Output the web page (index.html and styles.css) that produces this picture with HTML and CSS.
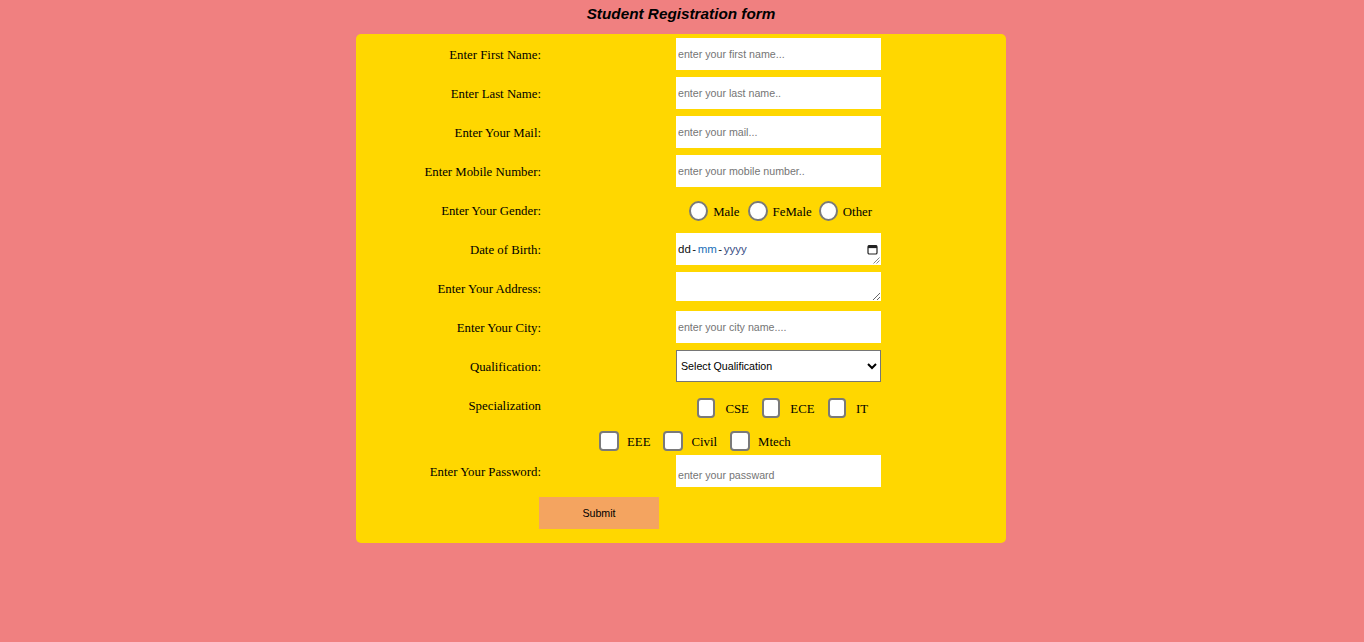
FILE: index.html
```html
<!DOCTYPE html>
<html lang="en">
<head>
<meta charset="utf-8">
<title>Student Registration form</title>
<link rel="stylesheet" href="styles.css">
</head>
<body>
<h1 class="title">Student Registration form</h1>
<form class="form">
  <div class="row">
    <label class="label">Enter First Name:</label>
    <input class="field" type="text" placeholder="enter your first name...">
  </div>
  <div class="row">
    <label class="label">Enter Last Name:</label>
    <input class="field" type="text" placeholder="enter your last name..">
  </div>
  <div class="row">
    <label class="label">Enter Your Mail:</label>
    <input class="field" type="text" placeholder="enter your mail...">
  </div>
  <div class="row">
    <label class="label">Enter Mobile Number:</label>
    <input class="field" type="text" placeholder="enter your mobile number..">
  </div>
  <div class="row">
    <label class="label">Enter Your Gender:</label>
    <div class="radios">
      <input class="radio" type="radio" name="g"><span class="opt opt-male">Male</span>
      <input class="radio" type="radio" name="g"><span class="opt opt-female">FeMale</span>
      <input class="radio" type="radio" name="g"><span class="opt">Other</span>
    </div>
  </div>
  <div class="row">
    <label class="label">Date of Birth:</label>
    <div class="date">
      <span class="date-text"><span class="seg-d">dd</span><span class="dash">-</span><span class="seg-m">mm</span><span class="dash">-</span><span class="seg-y">yyyy</span></span>
      <svg class="cal" width="11" height="11" viewBox="0 0 11 11" aria-hidden="true">
        <rect x="1" y="1.5" width="9" height="8.5" rx="1.3" fill="none" stroke="#222" stroke-width="1.2"/>
        <rect x="1" y="1.5" width="9" height="2.6" fill="#222"/>
      </svg>
      <svg class="grip" width="8" height="8" viewBox="0 0 8 8" aria-hidden="true">
        <path d="M7.5 1.5 L1.5 7.5 M7.5 4.5 L4.5 7.5" stroke="#888" stroke-width="1"/>
      </svg>
    </div>
  </div>
  <div class="row">
    <label class="label">Enter Your Address:</label>
    <textarea class="area"></textarea>
  </div>
  <div class="row">
    <label class="label">Enter Your City:</label>
    <input class="field" type="text" placeholder="enter your city name....">
  </div>
  <div class="row">
    <label class="label">Qualification:</label>
    <select class="select">
      <option>Select Qualification</option>
    </select>
  </div>
  <div class="row">
    <label class="label">Specialization</label>
    <div class="checks checks-one">
      <input class="check" type="checkbox"><span class="copt">CSE</span>
      <input class="check" type="checkbox"><span class="copt">ECE</span>
      <input class="check" type="checkbox"><span class="copt">IT</span>
    </div>
  </div>
  <div class="checks checks-two">
    <input class="check" type="checkbox"><span class="copt">EEE</span>
    <input class="check" type="checkbox"><span class="copt">Civil</span>
    <input class="check" type="checkbox"><span class="copt">Mtech</span>
  </div>
  <div class="row row-pass">
    <label class="label">Enter Your Password:</label>
    <input class="field field-pass" type="password" placeholder="enter your passward">
  </div>
  <div class="submit-row">
    <button class="submit" type="button">Submit</button>
  </div>
</form>
</body>
</html>
```
FILE: styles.css
```css
html, body {
  margin: 0;
  padding: 0;
}
body {
  background: #f08080;
  font-family: "Liberation Serif", "Times New Roman", serif;
  font-size: 12.8px;
  color: #000;
}
.title {
  margin: 0;
  height: 34px;
  box-sizing: border-box;
  padding-top: 5px;
  padding-right: 2px;
  line-height: 18px;
  text-align: center;
  font-family: "Liberation Sans", Arial, sans-serif;
  font-size: 15.3px;
  font-weight: bold;
  font-style: italic;
}
.form {
  width: 650px;
  margin-left: calc(50% - 326px);
  background: #ffd700;
  border-radius: 5px;
  padding: 4px 0 14px;
  box-sizing: border-box;
}
.row {
  display: grid;
  grid-template-columns: 185px 135px 205px;
  height: 32px;
  align-items: center;
  margin-top: 7px;
}
.row:first-child {
  margin-top: 0;
}
.label {
  grid-column: 1;
  text-align: right;
  padding-top: 2px;
}
.field, .area, .select, .radios, .checks-one, .date {
  grid-column: 3;
}
.field {
  width: 205px;
  height: 32px;
  box-sizing: border-box;
  border: none;
  padding: 0 2px;
  margin: 0;
  background: #fff;
  font-family: "Liberation Sans", Arial, sans-serif;
  font-size: 10.67px;
  color: #000;
  outline: none;
}
.field::placeholder {
  color: #757575;
}
.field-pass {
  padding-top: 7px;
}
.date {
  position: relative;
  width: 205px;
  height: 32px;
  box-sizing: border-box;
  background: #fff;
  display: flex;
  align-items: center;
  padding: 0 2px;
  font-family: "Liberation Sans", Arial, sans-serif;
  font-size: 11.5px;
}
.date-text {
  color: #111;
  padding-bottom: 1px;
}
.dash {
  margin: 0 1.5px;
}
.seg-m {
  color: #1a6fb8;
}
.seg-y {
  color: #3a4f86;
}
.cal {
  position: absolute;
  right: 3px;
  top: 11px;
}
.grip {
  position: absolute;
  right: 1px;
  bottom: 1px;
}
.area {
  align-self: start;
  width: 205px;
  height: 29px;
  box-sizing: border-box;
  border: none;
  padding: 0;
  margin: 0;
  background: #fff;
  resize: both;
}
.select {
  width: 205px;
  height: 32px;
  box-sizing: border-box;
  border: 1px solid #767676;
  border-radius: 0;
  background: #fff;
  margin: 0;
  padding-left: 0;
  font-family: "Liberation Sans", Arial, sans-serif;
  font-size: 10.67px;
  color: #000;
}
.radios {
  display: flex;
  align-items: center;
  padding-left: 13px;
  padding-top: 2px;
}
.radio {
  appearance: none;
  -webkit-appearance: none;
  width: 20px;
  height: 20px;
  box-sizing: border-box;
  border: 2px solid #7a7a7a;
  border-radius: 50%;
  background: #fff;
  margin: 0 5px 0 0;
}
.opt {
  margin-right: 9px;
  padding-top: 2px;
}
.opt-female {
  margin-right: 7px;
}
.checks {
  display: flex;
  align-items: center;
}
.checks-one {
  padding-left: 21px;
  padding-top: 6px;
}
.checks-one .check {
  margin-right: 10px;
}
.checks-two {
  height: 20px;
  margin-top: 10px;
  padding-left: 243px;
}
.check {
  appearance: none;
  -webkit-appearance: none;
  width: 20px;
  height: 20px;
  box-sizing: border-box;
  border: 2px solid #7a7a7a;
  border-radius: 4px;
  background: #fff;
  margin: 0 8px 0 0;
}
.copt {
  margin-right: 13px;
  padding-top: 2px;
}
.row-pass {
  margin-top: 4px;
}
.submit-row {
  margin-top: 10px;
  padding-left: 183px;
}
.submit {
  width: 120px;
  height: 32px;
  border: none;
  background: #f4a460;
  color: #000;
  font-family: "Liberation Sans", Arial, sans-serif;
  font-size: 10.67px;
  padding: 0;
  display: block;
}
```
